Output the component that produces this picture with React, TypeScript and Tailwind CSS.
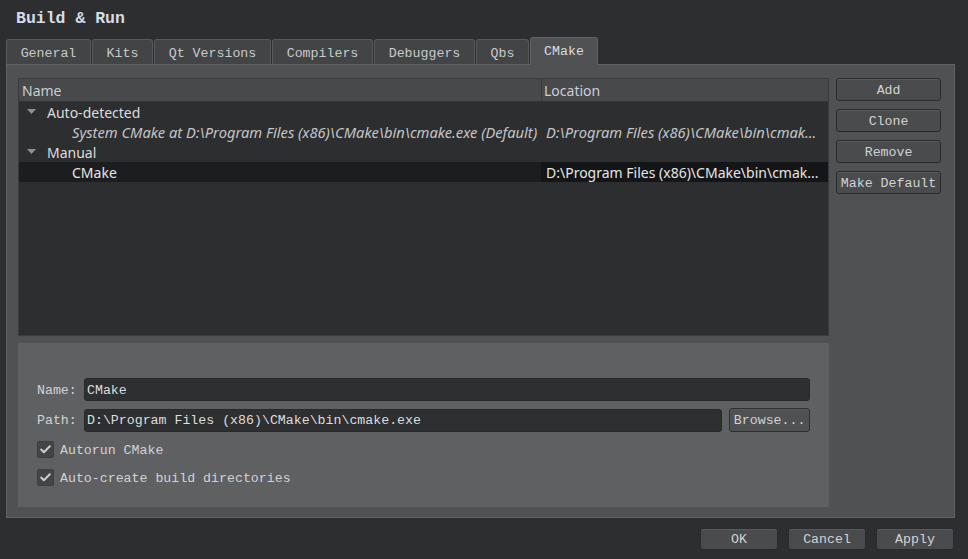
import { Check } from 'lucide-react';

const mono = "font-['Liberation_Mono','DejaVu_Sans_Mono',monospace]";
const sans = "font-['Noto_Sans','Open_Sans',sans-serif]";

const tabs = [
  { label: 'General', w: 'w-[85px]' },
  { label: 'Kits', w: 'w-[61px]' },
  { label: 'Qt Versions', w: 'w-[117px]' },
  { label: 'Compilers', w: 'w-[101px]' },
  { label: 'Debuggers', w: 'w-[101px]' },
  { label: 'Qbs', w: 'w-[53px]' },
];

function Btn({ label, className = '' }: { label: string; className?: string }) {
  return (
    <div
      className={`flex items-center justify-center rounded-[3px] border border-[#2a2b2d] bg-[#4a4b4d] pt-[2px] text-[13.25px] text-[#d2d3d4] shadow-[inset_0_1px_0_#5a5b5d] ${mono} ${className}`}
    >
      {label}
    </div>
  );
}

function Triangle() {
  return (
    <svg width="9" height="6" viewBox="0 0 9 6" className="mr-[11px] ml-[8px]">
      <path d="M0 0 L9 0 L4.5 5 Z" fill="#8e8f91" />
    </svg>
  );
}

function CheckRow({ label }: { label: string }) {
  return (
    <div className="flex h-[17px] items-center">
      <div className="flex h-[17px] w-[17px] items-center justify-center rounded-[2px] border border-[#3c3d3f] bg-[#434446]">
        <Check className="h-[13px] w-[13px] text-[#d0d0d0]" strokeWidth={3.5} />
      </div>
      <span className="ml-[6px] pt-[2px] text-[13.25px] text-[#d2d3d4]">{label}</span>
    </div>
  );
}

export default function App() {
  return (
    <div className={`flex h-[559px] w-[968px] flex-col bg-[#2d2e30] ${mono}`}>
      {/* Title */}
      <div className="h-[37px] pl-[16px] pt-[8px] text-[16.5px] font-bold leading-[22px] text-[#d6dce4]">
        Build &amp; Run
      </div>

      {/* Tabs */}
      <div className="relative z-10 flex h-[27px] items-end gap-[1px] pl-[6px]">
        {tabs.map((t) => (
          <div
            key={t.label}
            className={`flex h-[25px] items-center justify-center rounded-t-[3px] border border-b-0 border-[#58595b] bg-[#434446] pt-[3px] text-[13.25px] text-[#c9cacb] ${t.w}`}
          >
            {t.label}
          </div>
        ))}
        <div className="-mb-[1px] flex h-[28px] w-[68px] items-center justify-center rounded-t-[3px] border border-b-0 border-[#616264] bg-[#505153] text-[13.25px] text-[#dcdddd]">
          CMake
        </div>
      </div>

      {/* Pane */}
      <div className="ml-[6px] mr-[13px] flex h-[454px] border border-[#616264] bg-[#505153] pb-[10px] pl-[11px] pr-[13px] pt-[13px]">
        <div className="flex w-[812px] flex-col gap-[7px]">
          {/* Tree */}
          <div className={`flex h-[258px] flex-col border border-[#3a3b3d] bg-[#2d2e30] text-[14px] ${sans}`}>
            <div className="flex h-[23px] shrink-0 border-b border-[#333436] bg-[#48494b] text-[#c9ced6]">
              <div className="flex w-[523px] items-center border-r border-[#3a3b3d] pl-[3px]">Name</div>
              <div className="flex flex-1 items-center pl-[2px]">Location</div>
            </div>
            <div className="flex h-[20px] items-center text-[#dcdcdc]">
              <Triangle />
              Auto-detected
            </div>
            <div className="flex h-[20px] items-center italic text-[#c4c5c6]">
              <div className="w-[524px] whitespace-nowrap pl-[53px] text-[14.7px]">
                System CMake at D:\Program Files (x86)\CMake\bin\cmake.exe (Default)
              </div>
              <div className="flex-1 whitespace-nowrap pl-[3px] text-[14.7px]">D:\Program Files (x86)\CMake\bin\cmak...</div>
            </div>
            <div className="flex h-[20px] items-center text-[#dcdcdc]">
              <Triangle />
              Manual
            </div>
            <div className="flex h-[20px] items-center text-[#e6e6e6]">
              <div className="flex h-full w-[522px] items-center bg-[#1c1d1e] pl-[53px]">CMake</div>
              <div className="flex h-full flex-1 items-center whitespace-nowrap bg-[#141516] pl-[5px]">
                D:\Program Files (x86)\CMake\bin\cmak...
              </div>
            </div>
          </div>

          {/* Details */}
          <div className="flex h-[164px] flex-col bg-[#5f6062] pl-[19px] pr-[19px] pt-[35px] text-[13.25px] text-[#d2d3d4]">
            <div className="flex h-[23px] items-center">
              <span className="w-[47px] pt-[2px]">Name:</span>
              <div className="flex h-[23px] flex-1 items-center rounded-[3px] border border-[#28292b] bg-[#2e2f31] pl-[2px] pt-[2px] text-[#dedede]">
                CMake
              </div>
            </div>
            <div className="mt-[7px] flex h-[24px] items-center">
              <span className="w-[47px] pt-[2px]">Path:</span>
              <div className="flex h-[23px] flex-1 items-center rounded-[3px] border border-[#28292b] bg-[#2e2f31] pl-[2px] pt-[2px] text-[#dedede]">
                D:\Program Files (x86)\CMake\bin\cmake.exe
              </div>
              <Btn label="Browse..." className="ml-[7px] h-[24px] w-[81px] border-[#2e2f31] bg-[#505153]" />
            </div>
            <div className="mt-[9px] flex flex-col gap-[11px]">
              <CheckRow label="Autorun CMake" />
              <CheckRow label="Auto-create build directories" />
            </div>
          </div>
        </div>

        {/* Side buttons */}
        <div className="ml-[7px] flex w-[105px] flex-col gap-[8px]">
          <Btn label="Add" className="h-[23px]" />
          <Btn label="Clone" className="h-[23px]" />
          <Btn label="Remove" className="h-[23px]" />
          <Btn label="Make Default" className="h-[23px]" />
        </div>
      </div>

      {/* Dialog buttons */}
      <div className="flex justify-end gap-[10px] pr-[14px] pt-[10px]">
        <Btn label="OK" className="h-[22px] w-[78px]" />
        <Btn label="Cancel" className="h-[22px] w-[78px]" />
        <Btn label="Apply" className="h-[22px] w-[78px]" />
      </div>
    </div>
  );
}
